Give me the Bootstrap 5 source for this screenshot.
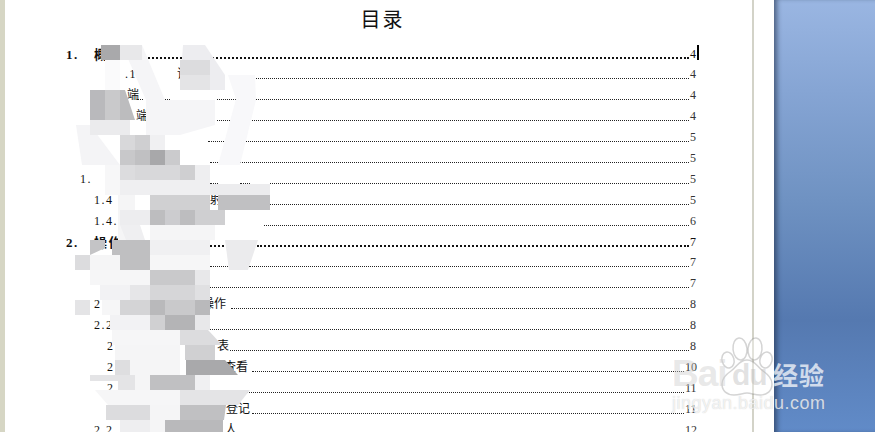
<!DOCTYPE html>
<html lang="zh">
<head>
<meta charset="utf-8">
<title>目录</title>
<link href="https://cdn.jsdelivr.net/npm/bootstrap@5.3.0/dist/css/bootstrap.min.css" rel="stylesheet">
<style>
html,body{width:875px;height:432px;overflow:hidden;background:#fff}
body{font-family:"Liberation Serif","Noto Sans CJK SC",serif;color:#111}
.stage{width:875px;height:432px}
.edge-left{width:5px;background:#d6d6c4;flex:none}
.sheet{width:749px;flex:none;border-right:2px solid #d3d3c8;padding:0 53px 0 61px}
.gutter{width:20px;flex:none;background:#fff}
.desk{flex:1;background:linear-gradient(180deg,#9ab6e2 0,#86a5d4 90px,#6f92c2 200px,#5579b0 320px,#618bc8 432px);box-shadow:inset 5px 0 5px -2px rgba(30,45,70,.6)}
.doc-title{height:44.5px;margin:0;padding-top:5px;text-align:center;font-size:20px;line-height:28px;font-weight:400;font-family:"Noto Sans CJK SC",sans-serif;letter-spacing:2px;color:#111}
.toc-row{height:20.9px;font-size:12px;line-height:19px;white-space:nowrap;letter-spacing:1.5px}
.toc-row>*{flex:none}
.toc-row.major{font-weight:700;font-size:13px}
.toc-row>.leader{flex:1 1 0;height:14px;border-bottom:1px dotted #222;margin-right:1px}
.stub{height:14px;border-bottom:1px dotted #222}
.major .leader,.major .stub{border-bottom:2px dotted #111;height:14.5px}
.pg{width:9px;font-size:12px;color:#333;font-weight:400;letter-spacing:0}
.toc-row>.pg.wide{width:14px}
.major .pg{color:#111}
.cjk{letter-spacing:0}
.caret-bar{width:2px;height:15px;background:#000;margin:0 0 4px -2px}
.w5{width:5px}.w6{width:6px}.w8{width:8px}.w10{width:10px}.w13{width:13px}.w14{width:14px}.w16{width:16px}.w18{width:18px}.w19{width:19px}.w20{width:20px}.w21{width:21px}.w22{width:22px}.w26{width:26px}.w28{width:28px}.w29{width:29px}.w33{width:33px}.w41{width:41px}.w47{width:47px}.w52{width:52px}.w59{width:59px}.w60{width:60px}.w61{width:61px}.w70{width:70px}.w77{width:77px}.w81{width:81px}.w103{width:103px}.w108{width:108px}.w110{width:110px}.w116{width:116px}.w117{width:117px}.w130{width:130px}.w131{width:131px}.w142{width:142px}.w144{width:144px}.w160{width:160px}.w170{width:170px}
.mosaic{position:absolute;left:0;top:0;pointer-events:none}
.brand{position:absolute;left:672px;top:340px;width:170px;height:80px;pointer-events:none}
.brand-b{position:absolute;top:12px;font:700 37px/44px "Liberation Sans",sans-serif;letter-spacing:-1px;color:rgba(205,205,205,.45)}
.brand-bai{left:0}
.brand-du{left:60px;top:15px;font-size:30px;line-height:40px;color:rgba(180,180,180,.4)}
.brand-cn{position:absolute;left:101px;top:17px;font:700 25px/34px "Noto Sans CJK SC",sans-serif;letter-spacing:1px;color:rgba(255,255,255,.72)}
.brand-url{position:absolute;left:0;top:51px;font:400 18px/24px "Liberation Sans",sans-serif;letter-spacing:.5px;color:rgba(255,255,255,.72);text-shadow:0 0 1px rgba(120,120,120,.4)}
.paw{position:absolute;left:0;top:-10px;overflow:visible}
</style>
</head>
<body>
<div class="stage d-flex position-relative">
  <div class="edge-left"></div>
  <div class="sheet">
    <h1 class="doc-title">目录</h1>
    <div class="toc-row major d-flex"><span class="w28">1.</span><span>概</span><span class="leader"></span><span class="pg">4</span><span class="caret-bar"></span></div>
    <div class="toc-row d-flex"><i class="w59"></i><span class="w52">.1</span><span class="w77 cjk">证</span><span class="leader"></span><span class="pg">4</span></div>
    <div class="toc-row d-flex"><i class="w61"></i><span class="w10 cjk">端</span><i class="stub w6"></i><i class="w22"></i><i class="stub w5"></i><i class="w47"></i><i class="stub w19"></i><i class="w20"></i><span class="leader"></span><span class="pg">4</span></div>
    <div class="toc-row d-flex"><i class="w70"></i><span class="w81 cjk">端</span><i class="stub w13"></i><i class="w22"></i><span class="leader"></span><span class="pg">4</span></div>
    <div class="toc-row d-flex"><i class="w142"></i><i class="stub w16"></i><i class="w20"></i><span class="leader"></span><span class="pg">5</span></div>
    <div class="toc-row d-flex"><i class="w144"></i><i class="stub w8"></i><i class="w22"></i><span class="leader"></span><span class="pg">5</span></div>
    <div class="toc-row d-flex"><i class="w14"></i><span class="w130">1.</span><i class="stub w8"></i><i class="w22"></i><i class="stub w10"></i><i class="w20"></i><span class="leader"></span><span class="pg">5</span></div>
    <div class="toc-row d-flex"><i class="w28"></i><span class="w116">1.4</span><span class="w60 cjk">射</span><span class="leader"></span><span class="pg">5</span></div>
    <div class="toc-row d-flex"><i class="w28"></i><span class="w170">1.4.</span><span class="leader"></span><span class="pg">6</span></div>
    <div class="toc-row major d-flex"><span class="w28">2.</span><span class="w116">操作</span><i class="stub w14"></i><i class="w33"></i><span class="leader"></span><span class="pg">7</span></div>
    <div class="toc-row d-flex"><i class="w144"></i><i class="stub w18"></i><i class="w21"></i><span class="leader"></span><span class="pg">7</span></div>
    <div class="toc-row d-flex"><i class="w144"></i><span class="leader"></span><span class="pg">7</span></div>
    <div class="toc-row d-flex"><i class="w28"></i><span class="w108">2</span><span class="w29 cjk">操作</span><span class="leader"></span><span class="pg">8</span></div>
    <div class="toc-row d-flex"><i class="w28"></i><span class="w116">2.2</span><span class="leader"></span><span class="pg">8</span></div>
    <div class="toc-row d-flex"><i class="w41"></i><span class="w110">2</span><span class="w13 cjk">表</span><span class="leader"></span><span class="pg">8</span></div>
    <div class="toc-row d-flex"><i class="w41"></i><span class="w117">2</span><span class="w28 cjk">查看</span><span class="leader"></span><span class="pg wide">10</span></div>
    <div class="toc-row d-flex"><i class="w41"></i><span class="w103">2.</span><span class="leader"></span><span class="pg wide">11</span></div>
    <div class="toc-row d-flex"><i class="w160"></i><span class="w26 cjk">登记</span><span class="leader"></span><span class="pg wide">11</span></div>
    <div class="toc-row d-flex"><i class="w28"></i><span class="w131">2.2</span><span class="cjk">人</span><span class="leader"></span><span class="pg wide">12</span></div>
  </div>
  <div class="gutter"></div>
  <div class="desk"></div>

  <svg class="mosaic" width="875" height="432" viewBox="0 0 875 432" aria-hidden="true">
    <polygon fill="#f5f5f7" points="122,45 142,45 165,100 215,100 215,125 180,135 146,135 146,100"/>
    <polygon fill="#ededf0" points="183,45 205,45 225,75 225,90 180,90"/>
    <polygon fill="#f8f8fa" points="228,75 255,75 256,100 240,165 218,165 236,99"/>
    <polygon fill="#f4f4f6" points="76,125 90,125 120,165 82,165"/>
    <rect fill="#fafafb" x="105" y="60" width="15" height="30"/>
    <rect fill="#dcdcde" x="180" y="60" width="30" height="15"/>
    <rect fill="#e4e4e6" x="180" y="75" width="30" height="15"/>
    <rect fill="#a9a9ab" x="101" y="45" width="19" height="15"/>
    <rect fill="#e8e8ea" x="120" y="45" width="22" height="15"/>
    <rect fill="#b9b9bc" x="90" y="90" width="15" height="30"/>
    <rect fill="#c9c9cb" x="105" y="90" width="15" height="30"/>
    <polygon fill="#bcbcbe" points="120,90 125,90 135,120 120,120"/>
    <rect fill="#ebebed" x="90" y="120" width="40" height="15"/>
    <rect fill="#d8d8da" x="120" y="135" width="15" height="15"/>
    <rect fill="#cfcfd1" x="135" y="135" width="15" height="15"/>
    <rect fill="#f0f0f2" x="150" y="135" width="15" height="15"/>
    <rect fill="#c8c8ca" x="120" y="150" width="15" height="15"/>
    <rect fill="#c0c0c2" x="135" y="150" width="15" height="15"/>
    <rect fill="#a8a8aa" x="150" y="150" width="15" height="15"/>
    <rect fill="#cbcbcd" x="165" y="150" width="15" height="15"/>
    <rect fill="#fff" x="165" y="135" width="40" height="15"/>
    <rect fill="#fff" x="180" y="150" width="30" height="15"/>
    <rect fill="#dcdcde" x="120" y="165" width="15" height="15"/>
    <rect fill="#d8d8da" x="135" y="165" width="45" height="15"/>
    <rect fill="#cfcfd1" x="180" y="165" width="15" height="15"/>
    <rect fill="#eeeef0" x="195" y="165" width="15" height="15"/>
    <rect fill="#f7f7f8" x="105" y="165" width="15" height="30"/>
    <rect fill="#efeff1" x="120" y="180" width="90" height="15"/>
    <rect fill="#ececee" x="210" y="184" width="60" height="11"/>
    <rect fill="#f5f5f6" x="118" y="195" width="17" height="45"/>
    <rect fill="#d0d0d2" x="150" y="195" width="60" height="15"/>
    <rect fill="#c0c0c2" x="218" y="195" width="52" height="15"/>
    <rect fill="#ededef" x="120" y="210" width="30" height="15"/>
    <rect fill="#bdbdbf" x="150" y="210" width="15" height="15"/>
    <rect fill="#cccccf" x="165" y="210" width="15" height="15"/>
    <rect fill="#bdbdbf" x="180" y="210" width="15" height="15"/>
    <rect fill="#cfcfd1" x="195" y="210" width="30" height="15"/>
    <rect fill="#f5f5f6" x="150" y="225" width="65" height="15"/>
    <polygon fill="#efeff1" points="120,225 140,225 150,255 132,255"/>
    <polygon fill="#c4c4c6" points="90,240 105,240 105,248 90,255"/>
    <rect fill="#bfbfc1" x="112" y="240" width="38" height="15"/>
    <rect fill="#f0f0f2" x="150" y="240" width="60" height="15"/>
    <polygon fill="#ebebed" points="225,240 258,240 248,270 229,270"/>
    <rect fill="#dcdcde" x="75" y="255" width="15" height="15"/>
    <rect fill="#f5f5f6" x="90" y="255" width="30" height="15"/>
    <rect fill="#bfbfc1" x="120" y="255" width="30" height="15"/>
    <rect fill="#f6f6f7" x="150" y="255" width="60" height="15"/>
    <rect fill="#f6f6f7" x="90" y="270" width="60" height="15"/>
    <rect fill="#c9c9cb" x="150" y="270" width="45" height="15"/>
    <rect fill="#e8e8ea" x="195" y="270" width="15" height="15"/>
    <rect fill="#f2f2f4" x="100" y="285" width="30" height="15"/>
    <rect fill="#e6e6e8" x="130" y="285" width="20" height="15"/>
    <rect fill="#d6d6d8" x="150" y="285" width="45" height="15"/>
    <rect fill="#e0e0e2" x="195" y="285" width="15" height="15"/>
    <rect fill="#e4e4e6" x="75" y="300" width="15" height="15"/>
    <rect fill="#f6f6f7" x="102" y="300" width="18" height="15"/>
    <rect fill="#d4d4d6" x="120" y="300" width="30" height="15"/>
    <rect fill="#b9b9bb" x="150" y="300" width="15" height="15"/>
    <rect fill="#c9c9cb" x="165" y="300" width="30" height="15"/>
    <rect fill="#b9b9bb" x="195" y="300" width="15" height="15"/>
    <rect fill="#f2f2f4" x="110" y="315" width="40" height="15"/>
    <rect fill="#d0d0d2" x="150" y="315" width="15" height="15"/>
    <rect fill="#b4b4b6" x="165" y="315" width="30" height="15"/>
    <rect fill="#e8e8ea" x="195" y="315" width="15" height="15"/>
    <rect fill="#f6f6f7" x="112" y="330" width="68" height="15"/>
    <polygon fill="#dcdcde" points="180,330 208,330 222,345 180,345"/>
    <rect fill="#f5f5f6" x="115" y="345" width="65" height="15"/>
    <rect fill="#d0d0d2" x="185" y="345" width="30" height="15"/>
    <rect fill="#dedee0" x="115" y="360" width="15" height="15"/>
    <rect fill="#f5f5f6" x="130" y="360" width="50" height="15"/>
    <polygon fill="#a9a9ab" points="186,360 225,360 238,375 186,375"/>
    <rect fill="#e4e4e6" x="90" y="375" width="45" height="6"/>
    <rect fill="#e4e4e6" x="118" y="381" width="17" height="9"/>
    <rect fill="#f5f5f6" x="135" y="375" width="15" height="15"/>
    <rect fill="#c0c0c2" x="150" y="375" width="45" height="15"/>
    <rect fill="#f0f0f2" x="195" y="375" width="15" height="15"/>
    <polygon fill="#f6f6f7" points="95,390 180,390 180,405 108,405"/>
    <polygon fill="#e4e4e6" points="180,390 250,390 238,405 180,405"/>
    <rect fill="#dcdcde" x="106" y="405" width="44" height="15"/>
    <rect fill="#f5f5f6" x="150" y="405" width="30" height="15"/>
    <polygon fill="#c0c0c2" points="180,405 226,405 224,420 180,420"/>
    <rect fill="#eeeef0" x="120" y="420" width="30" height="12"/>
    <rect fill="#f5f5f6" x="150" y="420" width="15" height="12"/>
    <rect fill="#b9b9bb" x="165" y="420" width="58" height="12"/>
  </svg>

  <div class="brand">
    <svg class="paw" width="170" height="80" viewBox="0 0 170 80" aria-hidden="true">
      <g fill="rgba(255,255,255,.35)" stroke="rgba(120,120,120,.32)" stroke-width="1.5">
        <ellipse cx="68" cy="19" rx="7" ry="11" transform="rotate(-6 68 19)"/>
        <ellipse cx="83" cy="19" rx="7" ry="11" transform="rotate(6 83 19)"/>
        <ellipse cx="56" cy="30" rx="6" ry="8" transform="rotate(-15 56 30)"/>
        <ellipse cx="94" cy="30" rx="6" ry="8" transform="rotate(15 94 30)"/>
        <path d="M75 30c-8 0-10 7-16 11-6 4-9 8-9 13 0 7 5 11 12 11 5 0 9-2 13-2s8 2 13 2c7 0 12-4 12-11 0-5-3-9-9-13-6-4-8-11-16-11z"/>
      </g>
    </svg>
    <span class="brand-b brand-bai">Bai</span>
    <span class="brand-b brand-du">du</span>
    <span class="brand-cn">经验</span>
    <span class="brand-url">jingyan.baidu.com</span>
  </div>
</div>
<script src="https://cdn.jsdelivr.net/npm/bootstrap@5.3.0/dist/js/bootstrap.bundle.min.js"></script>
</body>
</html>
